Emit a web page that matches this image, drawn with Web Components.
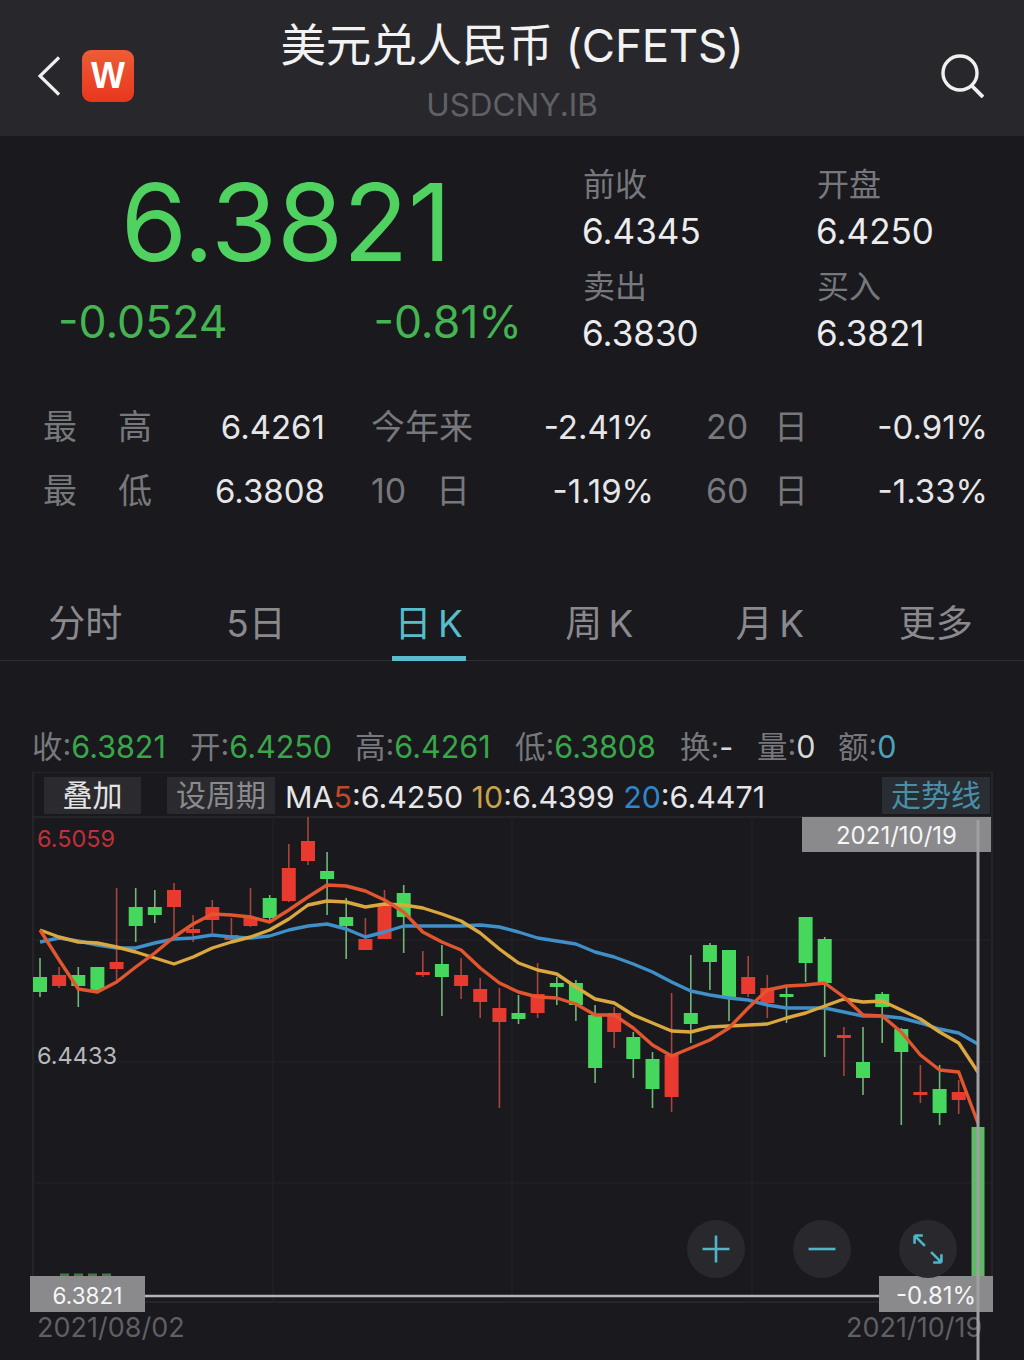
<!DOCTYPE html>
<html lang="zh">
<head>
<meta charset="utf-8">
<title>USDCNY.IB</title>
<style>
  html, body { margin: 0; padding: 0; background: #19191e; }
  body {
    width: 1024px; height: 1360px; overflow: hidden;
    font-family: Inter, "Noto Sans CJK SC", sans-serif;
    font-weight: 400;
  }
</style>
</head>
<body>
  <quote-header>
    <span>美元兑人民币 (CFETS)</span>
    <span slot="code">USDCNY.IB</span>
  </quote-header>

  <quote-summary price="6.3821" change="-0.0524" pct="-0.81%">
    <stat-cell label="前收" value="6.4345"></stat-cell>
    <stat-cell label="开盘" value="6.4250"></stat-cell>
    <stat-cell label="卖出" value="6.3830"></stat-cell>
    <stat-cell label="买入" value="6.3821"></stat-cell>
  </quote-summary>

  <range-table>
    <range-item label="最,高" value="6.4261"></range-item>
    <range-item label="今年来" value="-2.41%" ancho="105"></range-item>
    <range-item label="20,日" value="-0.91%" ancho="102"></range-item>
    <range-item label="最,低" value="6.3808"></range-item>
    <range-item label="10,日" value="-1.19%" ancho="99"></range-item>
    <range-item label="60,日" value="-1.33%" ancho="102"></range-item>
  </range-table>

  <period-tabs>
    <period-tab>分时</period-tab>
    <period-tab>5日</period-tab>
    <period-tab active>日 K</period-tab>
    <period-tab>周 K</period-tab>
    <period-tab>月 K</period-tab>
    <period-tab>更多</period-tab>
  </period-tabs>

  <ohlc-line>
    <ohlc-item label="收" value="6.3821" width="158"></ohlc-item>
    <ohlc-item label="开" value="6.4250" width="165"></ohlc-item>
    <ohlc-item label="高" value="6.4261" width="160"></ohlc-item>
    <ohlc-item label="低" value="6.3808" width="165"></ohlc-item>
    <ohlc-item label="换" value="-" width="77" tone="#d8d8da"></ohlc-item>
    <ohlc-item label="量" value="0" width="81" tone="#d8d8da"></ohlc-item>
    <ohlc-item label="额" value="0" width="60" tone="#4aa3bd"></ohlc-item>
  </ohlc-line>

  <kline-chart></kline-chart>

<script>
// Cabecera con volver, logo, titulo y lupa
class QuoteHeader extends HTMLElement {
  constructor() {
    super();
    this.attachShadow({mode: 'open'});
    this.shadowRoot.innerHTML = `
      <style>
        :host { display: grid; grid-template-columns: 1fr auto 1fr; height: 136px; background: #28282c; align-items: center; padding: 0 38px; box-sizing: border-box; }
        .left { display: flex; align-items: center; gap: 22px; padding-top: 16px; }
        .logo { width: 52px; height: 52px; border-radius: 9px; background: linear-gradient(#ee5c36, #e8361e); color: #fff; font: 700 36px "Liberation Sans", sans-serif; display: flex; align-items: center; justify-content: center; }
        .mid { text-align: center; padding-top: 1px; }
        .title { font-size: 45.6px; line-height: 62px; color: #f2f2f2; white-space: nowrap; letter-spacing: -0.2px; }
        .code { font-size: 31.5px; line-height: 36px; color: #5f6166; margin-top: 10px; }
        .right { display: flex; justify-content: flex-end; padding-top: 16px; margin-right: 2px; }
        svg { display: block; }
      </style>
      <div class="left">
        <svg width="22" height="40" viewBox="0 0 22 40"><path d="M21 1.5 2 20l19 18.5" fill="none" stroke="#f0f0f0" stroke-width="3.2"/></svg>
        <div class="logo">W</div>
      </div>
      <div class="mid">
        <div class="title"><slot></slot></div>
        <div class="code"><slot name="code"></slot></div>
      </div>
      <div class="right">
        <svg width="44" height="44" viewBox="0 0 44 44"><circle cx="20" cy="19" r="17" fill="none" stroke="#f0f0f0" stroke-width="3.4"/><path d="M31 31l12 12" stroke="#f0f0f0" stroke-width="3.8"/></svg>
      </div>`;
  }
}

// Precio grande a la izquierda y las cuatro celdas a la derecha
class QuoteSummary extends HTMLElement {
  constructor() {
    super();
    this.attachShadow({mode: 'open'});
  }
  connectedCallback() {
    this.shadowRoot.innerHTML = `
      <style>
        :host { display: grid; grid-template-columns: 583px 234px 1fr; padding-top: 26px; }
        .main { grid-row: span 2; padding: 0 0 0 58px; width: 464px; }
        .price { font-size: 107px; line-height: 120px; color: #4fd25f; text-align: center; margin: 0 0 0 -2px; width: 460px; letter-spacing: -0.2px; }
        .delta { display: flex; justify-content: space-between; margin-top: 12px; font-size: 44.5px; line-height: 56px; color: #45b552; }
        ::slotted(stat-cell) { margin-bottom: 10px; }
      </style>
      <div class="main">
        <div class="price">${this.getAttribute('price')}</div>
        <div class="delta"><span>${this.getAttribute('change')}</span><span>${this.getAttribute('pct')}</span></div>
      </div>
      <slot></slot>`;
  }
}

class StatCell extends HTMLElement {
  constructor() {
    super();
    this.attachShadow({mode: 'open'});
  }
  connectedCallback() {
    this.shadowRoot.innerHTML = `
      <style>
        :host { display: block; height: 92px; }
        div { line-height: 46px; white-space: nowrap; }
        .l { font-size: 32px; color: #77787c; }
        .v { font-size: 35px; color: #ececee; margin-left: -1px; }
      </style>
      <div class="l">${this.getAttribute('label')}</div>
      <div class="v">${this.getAttribute('value')}</div>`;
  }
}

class RangeTable extends HTMLElement {
  constructor() {
    super();
    this.attachShadow({mode: 'open'});
    this.shadowRoot.innerHTML = `
      <style>
        :host { display: grid; grid-template-columns: 328px 335px 282px; justify-content: start; margin-top: 29px; padding-left: 43px; }
        ::slotted(:nth-child(3n+1)) { padding-right: 46px; }
        ::slotted(:nth-child(3n+2)) { padding-right: 52px; }
      </style>
      <slot></slot>`;
  }
}

class RangeItem extends HTMLElement {
  constructor() {
    super();
    this.attachShadow({mode: 'open'});
  }
  connectedCallback() {
    // La etiqueta se reparte con comas: "最,高" queda a los dos extremos
    let partes = this.getAttribute('label').split(',').map(p => `<span>${p}</span>`).join('');
    let ancho = this.getAttribute('ancho') || 109;
    this.shadowRoot.innerHTML = `
      <style>
        :host { display: flex; justify-content: space-between; align-items: center; height: 64px; }
        .l { display: flex; justify-content: space-between; align-items: baseline; width: ${ancho}px; font-size: 34px; line-height: 44px; color: #77787c; }
        .v { font-size: 33px; color: #e6e6e8; }
      </style>
      <div class="l">${partes}</div>
      <div class="v">${this.getAttribute('value')}</div>`;
  }
}

class PeriodTabs extends HTMLElement {
  constructor() {
    super();
    this.attachShadow({mode: 'open'});
    this.shadowRoot.innerHTML = `
      <style>
        :host { display: grid; grid-template-columns: repeat(6, 1fr); height: 91px; margin-top: 47px; box-sizing: border-box; border-bottom: 1px solid #303034; }
        ::slotted(:last-child) { padding-right: 6px; }
        ::slotted(:nth-child(n+3):nth-child(-n+5)) { padding-left: 4px; }
      </style>
      <slot></slot>`;
  }
}

class PeriodTab extends HTMLElement {
  constructor() {
    super();
    this.attachShadow({mode: 'open'});
    this.shadowRoot.innerHTML = `
      <style>
        :host { display: flex; justify-content: center; font-size: 37px; color: #8a8a8e; word-spacing: -4px; min-width: 0; }
        :host([active]) { color: #58bccd; }
        span { display: block; height: 91px; line-height: 108px; box-sizing: border-box; white-space: nowrap; }
        :host([active]) span { border-bottom: 5px solid #58bccd; padding: 0 3px; }
      </style>
      <span><slot></slot></span>`;
  }
}

class OhlcLine extends HTMLElement {
  constructor() {
    super();
    this.attachShadow({mode: 'open'});
    this.shadowRoot.innerHTML = `
      <style>
        :host { display: flex; height: 40px; margin-top: 64px; margin-bottom: 7px; padding-left: 32px; align-items: center; }
      </style>
      <slot></slot>`;
  }
}

class OhlcItem extends HTMLElement {
  constructor() {
    super();
    this.attachShadow({mode: 'open'});
  }
  connectedCallback() {
    let tono = this.getAttribute('tone') || '#3aa64a';
    this.shadowRoot.innerHTML = `
      <style>
        :host { display: block; width: ${this.getAttribute('width')}px; font-size: 30.5px; color: #77787c; white-space: nowrap; }
        b { font-weight: 400; color: ${tono}; }
      </style>
      ${this.getAttribute('label')}:<b>${this.getAttribute('value')}</b>`;
  }
}

class ZoomButton extends HTMLElement {
  constructor() {
    super();
    this.attachShadow({mode: 'open'});
  }
  connectedCallback() {
    let iconos = {
      plus: '<path d="M3 29h52M29 3v52"/>',
      minus: '<path d="M3 29h52"/>',
      expand: '<path d="M3 3l20 20M3 3h16M3 3v16M55 55 35 35M55 55H39M55 55V39"/>'
    };
    this.shadowRoot.innerHTML = `
      <style>
        :host { position: absolute; top: 448px; left: ${this.getAttribute('x')}px; width: 58px; height: 58px; border-radius: 50%; background: #29292d; display: flex; align-items: center; justify-content: center; }
        svg { display: block; }
      </style>
      <svg width="30" height="30" viewBox="0 0 58 58" fill="none" stroke="#4fb6c9" stroke-width="5">${iconos[this.getAttribute('kind')]}</svg>`;
  }
}

// [tipo, mecha arriba, cuerpo arriba, cuerpo abajo, mecha abajo] con x = 40 + i * 19.14
const VELAS = [
  ['g',958,977,992,997],['r',967,975,986,988],['g',967,975,986,1007],['g',967,967,990,990],['r',888,962,969,980],
  ['g',888,907,926,942],['g',890,907,915,923],['r',883,890,907,937],['r',915,929,933,942],['r',900,907,920,933],
  ['r',918,935,940,942],['r',888,917,926,927],['g',895,898,918,922],['r',844,868,901,902],['r',817,841,861,865],
  ['g',852,871,879,915],['g',898,917,926,959],['r',918,939,950,950],['r',890,905,939,939],['g',885,893,917,953],
  ['r',951,972,975,977],['g',945,964,977,1016],['r',958,975,986,999],['r',978,989,1002,1018],['r',988,1008,1022,1108],
  ['g',995,1013,1019,1024],['r',963,994,1013,1018],['g',977,983,987,1005],['g',980,983,1005,1021],['g',1005,1015,1068,1083],
  ['r',1007,1013,1032,1048],['g',1032,1037,1059,1078],['g',1052,1059,1089,1108],['r',993,1055,1097,1112],['g',955,1013,1024,1043],
  ['g',943,945,962,990],['g',950,950,997,1021],['r',956,977,994,997],['r',975,988,1003,1018],['g',987,994,997,1023],
  ['g',917,917,963,982],['g',937,939,983,1057],['r',1027,1035,1038,1076],['g',1027,1062,1078,1095],['g',992,994,1007,1043],
  ['g',1028,1029,1052,1125],['r',1065,1092,1094,1103],['g',1065,1089,1113,1125],['r',1080,1092,1100,1114]
];

// Medias moviles: un valor de y por vela
const MA5 = [930,960,989,992,982,967,953,937,924,914,915,917,922,910,897,885,886,891,900,912,932,942,950,968,983,992,997,998,1004,1015,1015,1028,1045,1056,1048,1040,1028,1008,990,986,985,983,997,1015,1016,1032,1055,1070,1072,1123];
const MA10 = [930,937,942,943,947,952,958,964,957,948,942,937,930,919,905,901,902,907,904,905,908,914,921,933,949,963,970,974,987,999,1003,1015,1023,1031,1032,1027,1026,1025,1024,1018,1013,1006,999,1002,1001,1010,1019,1032,1043,1072];
const MA20 = [942,938,941,945,948,948,943,939,938,935,937,938,936,930,926,924,929,937,932,926,926,926,926,925,927,932,938,941,944,952,957,964,972,982,991,995,998,1000,1005,1008,1008,1008,1012,1016,1016,1018,1023,1029,1033,1044];

class KlineChart extends HTMLElement {
  constructor() {
    super();
    this.attachShadow({mode: 'open'});
  }

  xDe(i) { return +(40 + i * 19.14).toFixed(1); }

  dibujarVelas() {
    return VELAS.map((v, i) => {
      let x = this.xDe(i);
      let rojo = v[0] == 'r';
      let cuerpo = rojo ? '#e93a30' : '#46d85c';
      let mecha = rojo ? '#a8443c' : '#6fb877';
      return `<path d="M${x} ${v[1]}V${v[4]}" stroke="${mecha}" stroke-width="1.6"/>` +
             `<rect x="${x - 7}" y="${v[2]}" width="14" height="${Math.max(v[3] - v[2], 3)}" fill="${cuerpo}"/>`;
    }).join('');
  }

  dibujarLinea(datos, color) {
    let puntos = datos.map((y, i) => this.xDe(i) + ',' + y).join(' ');
    return `<polyline points="${puntos}" fill="none" stroke="${color}" stroke-width="3.4" stroke-linejoin="round"/>`;
  }

  connectedCallback() {
    this.shadowRoot.innerHTML = `
      <style>
        :host { display: block; position: relative; height: 588px; }
        svg.plot { position: absolute; left: 0; top: 0; }
        .toolbar { position: relative; display: flex; align-items: center; height: 47px; margin-left: 44px; width: 946px; }
        .btn { height: 37px; line-height: 37px; text-align: center; background: #2b2b2f; font-size: 30px; color: #8a8a8e; box-sizing: border-box; white-space: nowrap; }
        .btn.on { width: 97px; color: #e4e4e4; margin-right: 26px; }
        .btn.per { width: 108px; margin-right: 10px; }
        .btn.trend { width: 108px; margin-left: auto; color: #4a8fa8; background: #282e34; }
        .ma { font-size: 30.4px; color: #e6e6e8; white-space: nowrap; margin-top: 2px; }
        .ma i { font-style: normal; }
        .tag { position: absolute; background: #8a8a8c; color: #f6f6f6; font-size: 24px; text-align: center; box-sizing: border-box; white-space: nowrap; }
        .lbl { position: absolute; font-size: 23.5px; white-space: nowrap; }
        .date { position: absolute; top: 539px; font-size: 27px; color: #5f5f64; white-space: nowrap; }
      </style>
      <svg class="plot" width="1024" height="588" viewBox="0 772 1024 588">
        <path d="M33 772V1302M992 772V1302M33 772H992M33 1302H992M33 817H992" stroke="#29292e" stroke-width="1.5" fill="none"/>
        <path d="M33 1183H992M33 940H992M33 1062H992M273 817V1302M512 817V1302M752 817V1302" stroke="#212126" stroke-width="1.5" fill="none"/>
        ${this.dibujarVelas()}
        <rect x="971.5" y="1127" width="13" height="150" fill="#5fba65"/>
        ${this.dibujarLinea(MA20, '#3f8fc8')}
        ${this.dibujarLinea(MA10, '#dba83f')}
        ${this.dibujarLinea(MA5, '#e2562f')}
        <path d="M60 1275H114" stroke="#3f7a48" stroke-width="3" stroke-dasharray="9 5"/>
        <path d="M145 1296H879" stroke="#b4b4b6" stroke-width="2.4"/>
      </svg>
      <div class="toolbar">
        <div class="btn on">叠加</div>
        <div class="btn per">设周期</div>
        <div class="ma">MA<i style="color:#c04a2a">5</i>:6.4250 <i style="color:#c9a24a">10</i>:6.4399 <i style="color:#2f86c8">20</i>:6.4471</div>
        <div class="btn trend">走势线</div>
      </div>
      <span class="lbl" style="left:37px;top:52px;color:#c03038">6.5059</span>
      <span class="lbl" style="left:37px;top:269px;color:#b8b8bb">6.4433</span>
      <div class="tag" style="left:802px;top:45px;width:189px;height:35px;line-height:37px">2021/10/19</div>
      <div class="tag" style="left:30px;top:504px;width:115px;height:36px;line-height:40px;font-size:22.5px">6.3821</div>
      <div class="tag" style="left:879px;top:504px;width:114px;height:36px;line-height:40px">-0.81%</div>
      <span class="date" style="left:37px">2021/08/02</span>
      <span class="date" style="left:846px">2021/10/19</span>
      <zoom-button kind="plus" x="687"></zoom-button>
      <zoom-button kind="minus" x="793"></zoom-button>
      <zoom-button kind="expand" x="899"></zoom-button>
      <svg class="plot" width="1024" height="588" viewBox="0 772 1024 588"><path d="M978 820V1360" stroke="#a0a0a4" stroke-width="3"/></svg>`;
  }
}

customElements.define('quote-header', QuoteHeader);
customElements.define('quote-summary', QuoteSummary);
customElements.define('stat-cell', StatCell);
customElements.define('range-table', RangeTable);
customElements.define('range-item', RangeItem);
customElements.define('period-tabs', PeriodTabs);
customElements.define('period-tab', PeriodTab);
customElements.define('ohlc-line', OhlcLine);
customElements.define('ohlc-item', OhlcItem);
customElements.define('zoom-button', ZoomButton);
customElements.define('kline-chart', KlineChart);
</script>
</body>
</html>
